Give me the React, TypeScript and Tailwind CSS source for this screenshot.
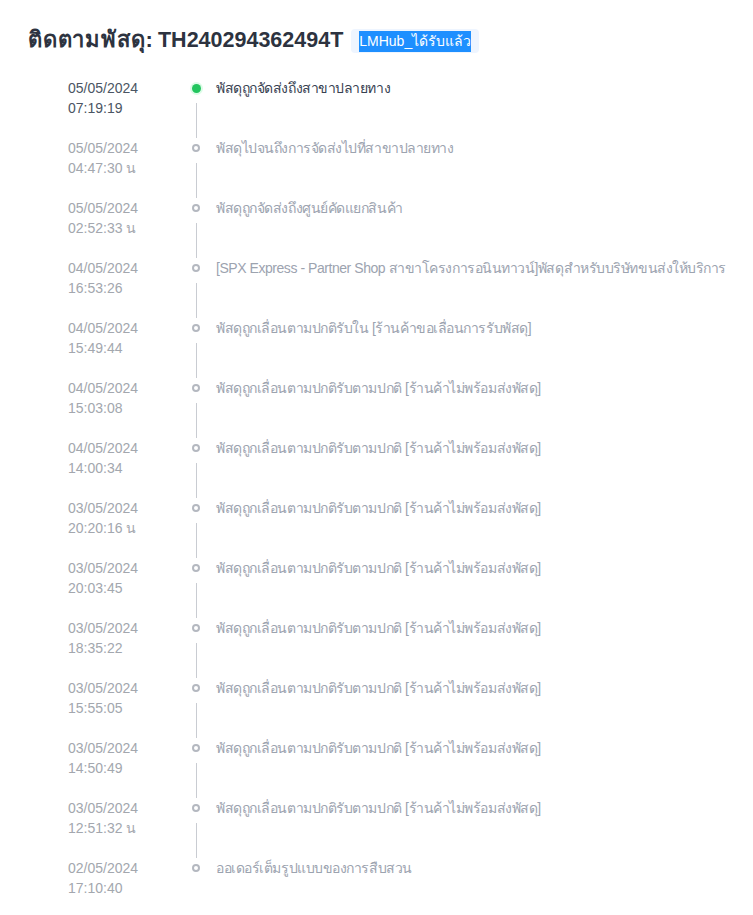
import React from 'react';

type Event = { date: string; time: string; text: string };

const events: Event[] = [
  { date: '05/05/2024', time: '07:19:19', text: 'พัสดุถูกจัดส่งถึงสาขาปลายทาง' },
  { date: '05/05/2024', time: '04:47:30 น', text: 'พัสดุไปจนถึงการจัดส่งไปที่สาขาปลายทาง' },
  { date: '05/05/2024', time: '02:52:33 น', text: 'พัสดุถูกจัดส่งถึงศูนย์คัดแยกสินค้า' },
  {
    date: '04/05/2024',
    time: '16:53:26',
    text: '[SPX Express - Partner Shop สาขาโครงการอนินทาวน์]พัสดุสำหรับบริษัทขนส่งให้บริการ',
  },
  { date: '04/05/2024', time: '15:49:44', text: 'พัสดุถูกเลื่อนตามปกติรับใน [ร้านค้าขอเลื่อนการรับพัสดุ]' },
  { date: '04/05/2024', time: '15:03:08', text: 'พัสดุถูกเลื่อนตามปกติรับตามปกติ [ร้านค้าไม่พร้อมส่งพัสดุ]' },
  { date: '04/05/2024', time: '14:00:34', text: 'พัสดุถูกเลื่อนตามปกติรับตามปกติ [ร้านค้าไม่พร้อมส่งพัสดุ]' },
  { date: '03/05/2024', time: '20:20:16 น', text: 'พัสดุถูกเลื่อนตามปกติรับตามปกติ [ร้านค้าไม่พร้อมส่งพัสดุ]' },
  { date: '03/05/2024', time: '20:03:45', text: 'พัสดุถูกเลื่อนตามปกติรับตามปกติ [ร้านค้าไม่พร้อมส่งพัสดุ]' },
  { date: '03/05/2024', time: '18:35:22', text: 'พัสดุถูกเลื่อนตามปกติรับตามปกติ [ร้านค้าไม่พร้อมส่งพัสดุ]' },
  { date: '03/05/2024', time: '15:55:05', text: 'พัสดุถูกเลื่อนตามปกติรับตามปกติ [ร้านค้าไม่พร้อมส่งพัสดุ]' },
  { date: '03/05/2024', time: '14:50:49', text: 'พัสดุถูกเลื่อนตามปกติรับตามปกติ [ร้านค้าไม่พร้อมส่งพัสดุ]' },
  { date: '03/05/2024', time: '12:51:32 น', text: 'พัสดุถูกเลื่อนตามปกติรับตามปกติ [ร้านค้าไม่พร้อมส่งพัสดุ]' },
  { date: '02/05/2024', time: '17:10:40', text: 'ออเดอร์เต็มรูปแบบของการสืบสวน' },
];

function TimelineRow({ event, first, last }: { event: Event; first: boolean; last: boolean }) {
  return (
    <div className="flex h-[60px]">
      <div
        className={`w-[160px] pl-10 text-[14px] leading-5 ${first ? 'text-[#4b5563]' : 'text-[#a3a7ae]'}`}
      >
        <div>{event.date}</div>
        <div>{event.time}</div>
      </div>
      <div className="flex w-4 flex-col items-center">
        <div className="flex h-5 items-center">
          {first ? (
            <span className="h-[9px] w-[9px] rounded-full bg-[#22c55e] ring-2 ring-[#dcfce7]" />
          ) : (
            <span className="h-[8px] w-[8px] rounded-full border-2 border-[#b4b8c0]" />
          )}
        </div>
        {!last && <div className="mt-[5px] w-px flex-1 bg-[#c9ccd2]" />}
      </div>
      <div
        className={`ml-3 whitespace-nowrap text-[14px] leading-5 tracking-[-0.45px] ${first ? 'text-[#374151]' : 'text-[#9ca3af]'}`}
      >
        {event.text}
      </div>
    </div>
  );
}

export default function App() {
  return (
    <div
      className="min-h-screen bg-white pt-[27px] pl-7"
      style={{ fontFamily: '"Liberation Sans", Arial, sans-serif' }}
    >
      <header className="flex h-7 items-center">
        <h1 className="whitespace-nowrap font-bold leading-7 text-[#2d3340]">
          <span className="text-[22px] tracking-[0.8px]">ติดตามพัสดุ:</span>{' '}
          <span className="text-[21.5px]">TH240294362494T</span>
        </h1>
        <span className="ml-2 flex h-6 items-center rounded bg-[#eef5ff] px-2 text-[14px]">
          <span className="bg-[#1e8fff] text-white">LMHub_ได้รับแล้ว</span>
        </span>
      </header>

      <main className="mt-[23px]">
        {events.map((e, i) => (
          <TimelineRow key={i} event={e} first={i === 0} last={i === events.length - 1} />
        ))}
      </main>
    </div>
  );
}
